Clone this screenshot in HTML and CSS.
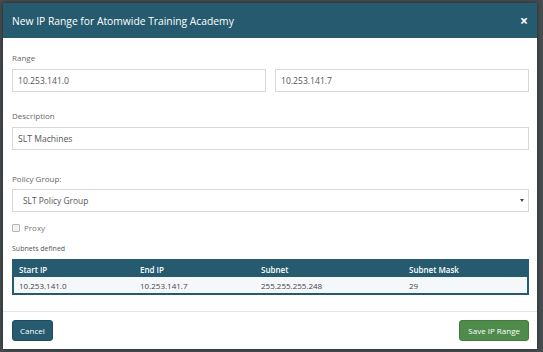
FILE: index.html
```html
<!DOCTYPE html>
<html lang="en">
<head>
  <meta charset="UTF-8">
  <meta name="viewport" content="width=device-width, initial-scale=1.0">
  <title>New IP Range</title>
  <link rel="stylesheet" href="styles.css">
</head>
<body>
  <div class="modal">
    <div class="modal-header">
      <h2>New IP Range for Atomwide Training Academy</h2>
      <span class="close">&times;</span>
    </div>

    <div class="modal-body">
      <div class="form-group">
        <label>Range</label>
        <div class="range-row">
          <input type="text" value="10.253.141.0">
          <input type="text" value="10.253.141.7">
        </div>
      </div>

      <div class="form-group">
        <label>Description</label>
        <input type="text" value="SLT Machines">
      </div>

      <div class="form-group policy">
        <label>Policy Group:</label>
        <div class="select">
          <span>SLT Policy Group</span>
          <span class="caret"></span>
        </div>
      </div>

      <div class="checkbox">
        <span class="box"></span>
        <span>Proxy</span>
      </div>

      <div class="subnets-label">Subnets defined</div>
      <table class="subnets">
        <thead>
          <tr>
            <th class="col-start">Start IP</th>
            <th class="col-end">End IP</th>
            <th class="col-subnet">Subnet</th>
            <th>Subnet Mask</th>
          </tr>
        </thead>
        <tbody>
          <tr>
            <td>10.253.141.0</td>
            <td>10.253.141.7</td>
            <td>255.255.255.248</td>
            <td>29</td>
          </tr>
        </tbody>
      </table>
    </div>

    <div class="modal-footer">
      <button class="btn btn-primary">Cancel</button>
      <button class="btn btn-success">Save IP Range</button>
    </div>
  </div>
</body>
</html>
```

FILE: styles.css
```css
body {
  margin: 0;
  font-family: 'Open Sans', 'Liberation Sans', sans-serif;
  background-color: #464c50;
  height: 352px;
  overflow: hidden;
}
.modal {
  margin: 3px 0 0 3px;
  width: 534px;
  background-color: white;
  box-shadow: 0 0 4px rgba(0, 0, 0, 0.5);
}
.modal-header {
  display: flex;
  align-items: center;
  justify-content: space-between;
  height: 35px;
  padding: 0 9px;
  background-color: #265b6f;
  color: white;
}
.modal-header h2 {
  margin: 0;
  font-size: 10.3px;
  font-weight: 400;
}
.close {
  font-size: 14px;
  font-weight: 700;
  line-height: 1;
  margin-right: 0;
}
.modal-body {
  padding: 14px 8px 16px 9px;
  color: #555;
}
.form-group {
  margin-bottom: 18px;
}
.form-group label {
  display: block;
  font-size: 8px;
  line-height: 12px;
  color: #666;
  margin-bottom: 5px;
}
.range-row {
  display: flex;
  gap: 9px;
}
input[type="text"] {
  display: block;
  box-sizing: border-box;
  width: 100%;
  height: 23px;
  margin: 0;
  padding: 0 5px;
  border: 1px solid #d8d8d8;
  font-family: inherit;
  font-size: 8.6px;
  color: #555;
  background: white;
}
.policy {
  margin-top: 23px;
  margin-bottom: 10px;
}
.policy label {
  margin-bottom: 4px;
}
.select {
  display: flex;
  align-items: center;
  justify-content: space-between;
  box-sizing: border-box;
  height: 23px;
  padding: 0 4px 0 10px;
  border: 1px solid #d8d8d8;
  font-size: 8.4px;
  color: #555;
}
.caret {
  width: 0;
  height: 0;
  border-left: 2.5px solid transparent;
  border-right: 2.5px solid transparent;
  border-top: 3px solid #444;
}
.checkbox {
  display: flex;
  align-items: center;
  gap: 4px;
  font-size: 8px;
  line-height: 12px;
  color: #777;
}
.box {
  width: 6px;
  height: 6px;
  border: 1px solid #b5b5b5;
  border-radius: 1px;
  background: #f2f2f2;
}
.subnets-label {
  margin-top: 9px;
  margin-bottom: 4px;
  font-size: 7px;
  line-height: 12px;
  color: #555;
}
.subnets {
  width: 100%;
  border-collapse: collapse;
  border: 2px solid #265b6f;
  font-size: 8px;
}
.subnets th {
  height: 16px;
  padding: 0 5px;
  text-align: left;
  font-weight: 600;
  color: white;
  background-color: #265b6f;
}
.subnets td {
  height: 16px;
  padding: 0 5px;
  background-color: #f5f8fb;
  color: #444;
}
.col-start { width: 111px; }
.col-end { width: 111px; }
.col-subnet { width: 138px; }
.modal-footer {
  display: flex;
  justify-content: space-between;
  padding: 8px 8px 8px 9px;
  border-top: 1px solid #e5e5e5;
}
.btn {
  height: 21px;
  padding: 0 7px;
  border: 1px solid transparent;
  border-radius: 3px;
  font-family: inherit;
  font-size: 8px;
  color: white;
}
.btn-primary {
  background-color: #265b6f;
  border-color: #1f4b5c;
}
.btn-success {
  padding: 0 8px;
  background-color: #4f8b4b;
  border-color: #447a40;
}
```
